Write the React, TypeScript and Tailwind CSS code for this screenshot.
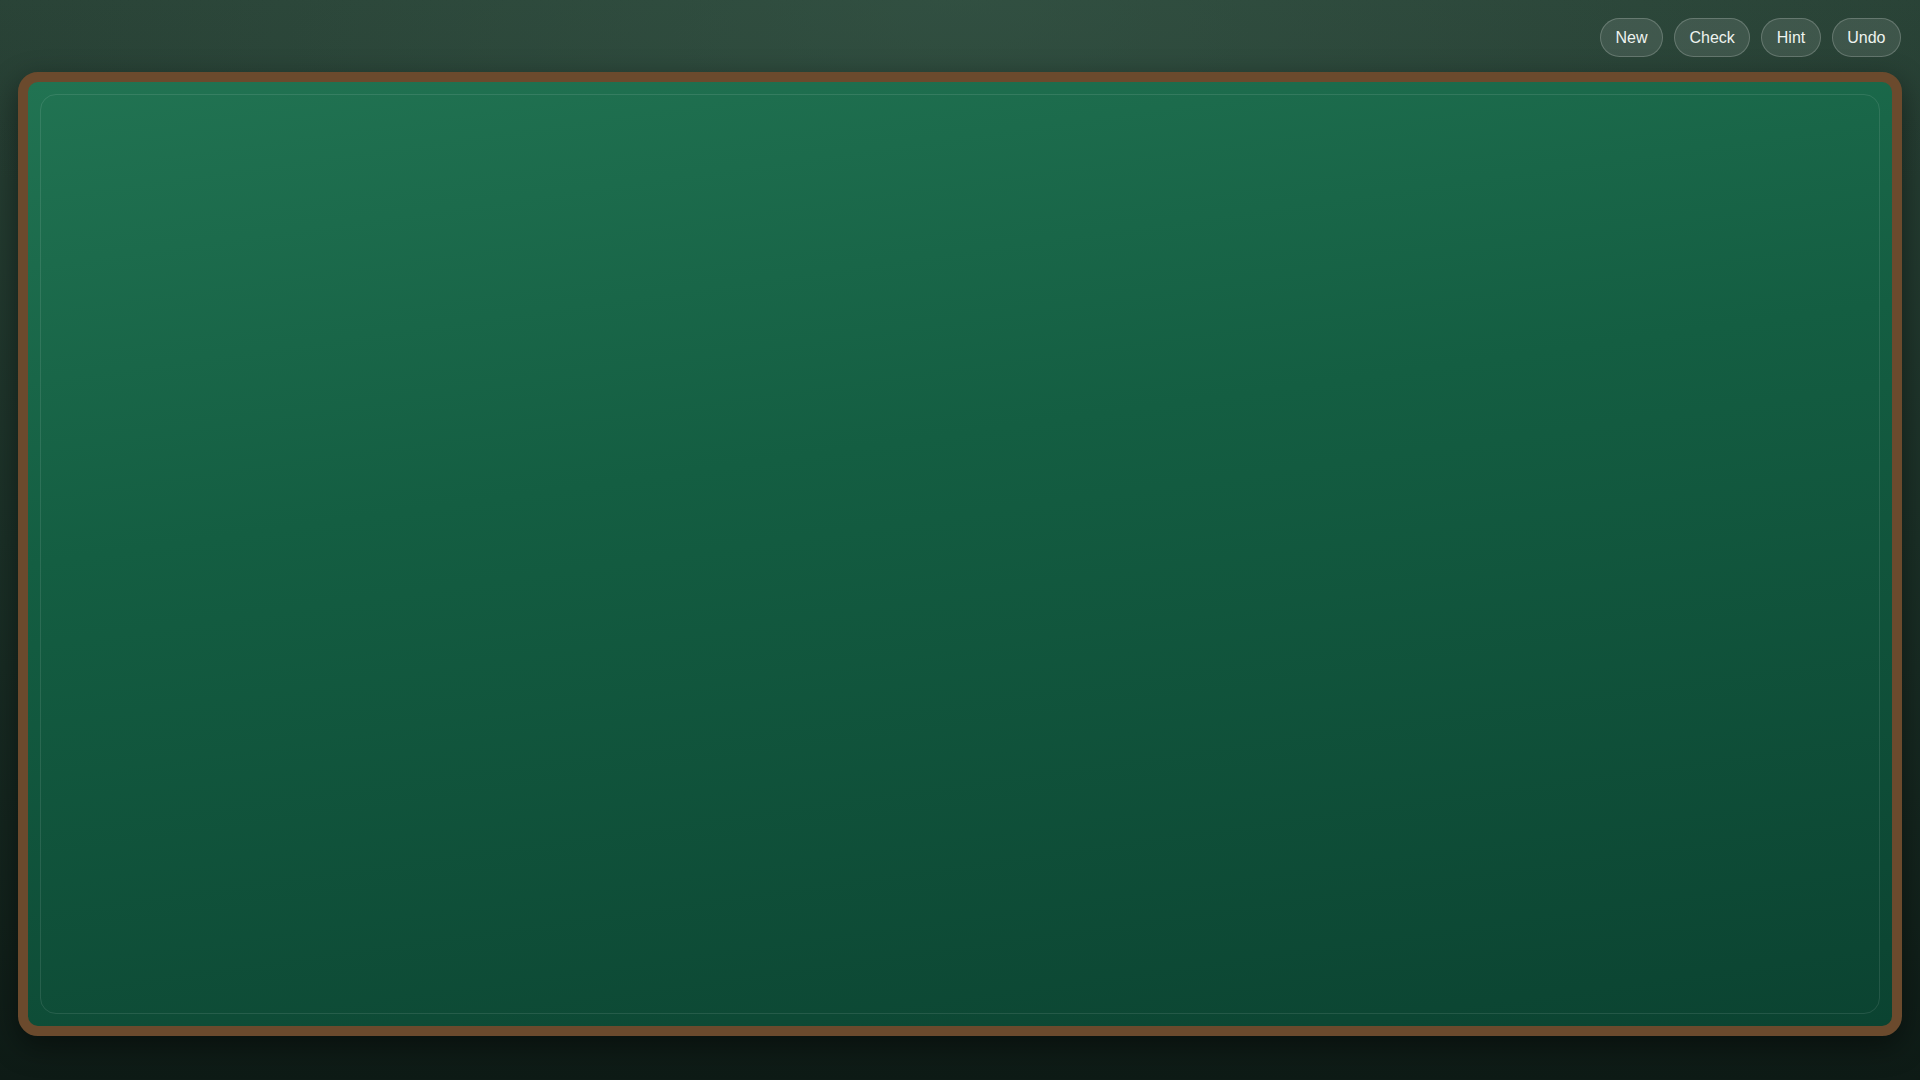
import React from "react";

const buttons = ["New", "Check", "Hint", "Undo"];

export default function App() {
    return (
        <div
            className="w-screen h-screen overflow-hidden flex flex-col px-[18px] pt-[18px] pb-[44px] gap-[15px] bg-[radial-gradient(ellipse_55%_40%_at_50%_0%,rgba(62,100,82,0.4),transparent),linear-gradient(180deg,#294236_0%,#1b3027_50%,#0e1b16_100%)]"
            style={{ fontFamily: '"Liberation Sans", Arial, sans-serif' }}
        >
            {/* toolbar */}
            <div className="flex justify-end gap-[11px] pr-[1px]">
                {buttons.map((b) => (
                    <button
                        key={b}
                        className="h-[39px] px-[14.5px] rounded-full border border-white/20 bg-white/[0.1] text-[16px] text-[#eef3ef] leading-none"
                    >
                        {b}
                    </button>
                ))}
            </div>

            {/* board */}
            <div className="flex-1 rounded-[20px] border-[10px] border-[#6b4a2d] bg-[linear-gradient(172deg,#217352_0%,#145e42_40%,#0b4331_100%)] p-[12px] shadow-[0_10px_30px_rgba(0,0,0,0.45)]">
                <div className="w-full h-full rounded-[16px] border border-white/10" />
            </div>
        </div>
    );
}
